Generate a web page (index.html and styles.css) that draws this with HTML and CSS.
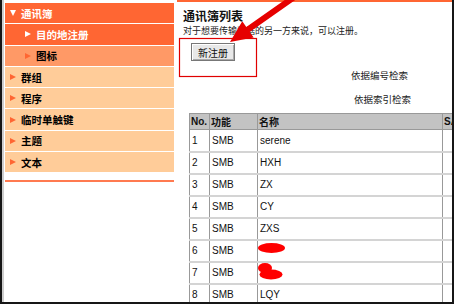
FILE: index.html
```html
<html>
    <head>
        <title>通讯簿</title>
        <link rel="stylesheet" href="styles.css">
    </head>
<body>
<div class="frame">
    <aside class="side">
        <ul class="menu">
            <li class="m-top"><span class="tri-down"></span>通讯簿</li>
            <li class="m-sub m-active"><span class="tri"></span>目的地注册</li>
            <li class="m-sub m-light"><span class="tri"></span>图标</li>
            <li><span class="tri"></span>群组</li>
            <li><span class="tri"></span>程序</li>
            <li><span class="tri"></span>临时单触键</li>
            <li><span class="tri"></span>主题</li>
            <li><span class="tri"></span>文本</li>
        </ul>
        <div class="side-rule"></div>
    </aside>

    <main class="content">
        <h2 class="title">通讯簿列表</h2>
        <p class="desc">对于想要传输数据的另一方来说，可以注册。</p>
        <div class="btn-row"><button type="button">新注册</button></div>
        <div class="search s1">依据编号检索</div>
        <div class="search s2">依据索引检索</div>

        <table class="list">
            <colgroup>
                <col class="c-no"><col class="c-fn"><col class="c-name"><col class="c-smb">
            </colgroup>
            <tr><th>No.</th><th>功能</th><th>名称</th><th>SAMBA</th></tr>
            <tr><td>1</td><td>SMB</td><td>serene</td><td></td></tr>
            <tr><td>2</td><td>SMB</td><td>HXH</td><td></td></tr>
            <tr><td>3</td><td>SMB</td><td>ZX</td><td></td></tr>
            <tr><td>4</td><td>SMB</td><td>CY</td><td></td></tr>
            <tr><td>5</td><td>SMB</td><td>ZXS</td><td></td></tr>
            <tr><td>6</td><td>SMB</td><td></td><td></td></tr>
            <tr><td>7</td><td>SMB</td><td></td><td></td></tr>
            <tr><td>8</td><td>SMB</td><td>LQY</td><td></td></tr>
        </table>
    </main>

    <!-- annotation layer: red box, arrow and redactions -->
    <svg class="marks" width="454" height="304" viewBox="0 0 454 304">
        <rect x="179.5" y="38.5" width="77" height="38" fill="none" stroke="#e00000" stroke-width="1.2"/>
        <polygon fill="#e60000" points="230,42 242.3,21.2 246.3,26.9 295.4,-7.5 298.8,-2.5 249.7,31.9 253.7,37.6"/>
        <ellipse cx="271.5" cy="248" rx="13.5" ry="5" fill="#ff0000"/>
        <ellipse cx="265" cy="268" rx="7" ry="5" fill="#ff0000"/>
        <ellipse cx="271" cy="274.5" rx="11.5" ry="5" fill="#ff0000"/>
    </svg>
</div>
</body>
</html>
```

FILE: styles.css
```css
body {
    margin: 0;
    background-color: white;
    font-family: "Liberation Sans", "Noto Sans CJK SC", sans-serif;
}

.frame {
    position: relative;
    display: flex;
    width: 454px;
    height: 304px;
    box-sizing: border-box;
    border-left: 2px solid #161616;
    border-right: 2px solid #161616;
    border-bottom: 2px solid #161616;
    overflow: hidden;
}

/* left menu */
.side {
    width: 170px;
    flex: none;
    border-left: 2px solid #cdcdcd;
    padding-left: 1px;
}
.menu {
    list-style: none;
    margin: 3px 0 0 0;
    padding: 0;
    width: 169px;
}
.menu li {
    display: flex;
    align-items: center;
    height: 20.3px;
    margin-bottom: 1px;
    padding-left: 5px;
    background: #ffcc99;
    font-family: "Noto Sans CJK SC", sans-serif;
    font-size: 10.5px;
    font-weight: bold;
    color: #000;
}
.menu li.m-top {
    background: #ff6633;
    color: white;
}
.menu li.m-active {
    background: #ff6633;
    color: white;
}
.menu li.m-light {
    background: #ff9966;
}
.menu li.m-sub {
    padding-left: 20px;
}
.tri {
    width: 0;
    height: 0;
    border-top: 3.5px solid transparent;
    border-bottom: 3.5px solid transparent;
    border-left: 6px solid #ff6633;
    margin-right: 5px;
}
.m-active .tri {
    border-left-color: white;
}
.tri-down {
    width: 0;
    height: 0;
    border-left: 3.5px solid transparent;
    border-right: 3.5px solid transparent;
    border-top: 6px solid white;
    margin-right: 5px;
}
.side-rule {
    width: 169px;
    height: 2px;
    margin-top: 8px;
    background: #ff7a50;
}

/* right side */
.content {
    flex: 1;
    margin-left: 2px;
    border-top: 2px solid #ff6633;
    overflow: hidden;
    font-family: "Noto Sans CJK SC", sans-serif;
}
.title {
    margin: 6.5px 0 0 0;
    padding-left: 6px;
    font-size: 12px;
    line-height: 14px;
    font-weight: bold;
    color: #111;
}
.desc {
    margin: 2.5px 0 0 0;
    padding-left: 6px;
    font-size: 9px;
    line-height: 12px;
    color: #222;
}
.btn-row {
    margin-top: 6px;
    padding-left: 14px;
}
.btn-row button {
    width: 44px;
    height: 18px;
    padding: 0;
    background: #e8e8e8;
    border: 1px solid #777;
    box-shadow: inset 1px 1px #fff, inset -1px -1px #aaa;
    font-family: "Noto Sans CJK SC", sans-serif;
    font-size: 10px;
    color: #111;
}
.search {
    font-size: 9.5px;
    line-height: 12px;
    color: #222;
}
.s1 {
    margin-top: 8px;
    padding-left: 174px;
}
.s2 {
    margin-top: 12px;
    padding-left: 177px;
}

.list {
    margin: 8px 0 0 12px;
    width: 340px;
    table-layout: fixed;
    border-collapse: collapse;
    font-family: "Liberation Sans", "Noto Sans CJK SC", sans-serif;
    font-size: 10px;
    color: #111;
}
.c-no { width: 20px; }
.c-fn { width: 48px; }
.c-name { width: 185px; }
.c-smb { width: 87px; }
.list th {
    height: 14px;
    padding: 0 0 0 1px;
    background: #c3c3c3;
    border: 1px solid #999;
    text-align: left;
    font-weight: bold;
    white-space: nowrap;
    overflow: hidden;
}
.list td {
    height: 22px;
    padding: 0 0 0 2px;
    border-left: 1px solid #999;
    border-right: 1px solid #999;
    border-bottom: 2px solid #d4d4d4;
}

.marks {
    position: absolute;
    left: -2px;
    top: 0;
    pointer-events: none;
}
```
